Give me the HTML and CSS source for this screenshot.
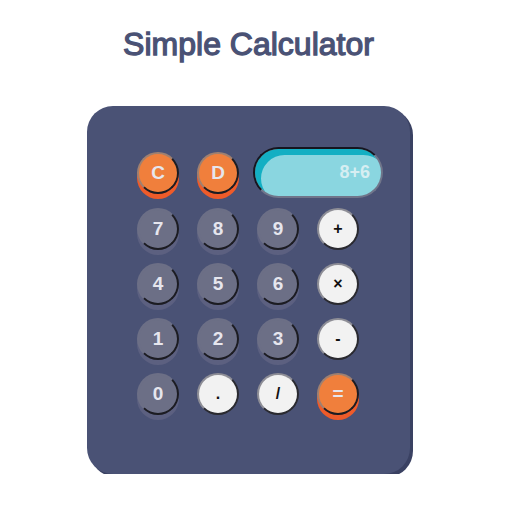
FILE: index.html
```html
<!DOCTYPE html>
<html>
<head>
<meta charset="utf-8">
<link rel="stylesheet" href="styles.css">
</head>
<body>
<div class="wrap">
  <h1 class="title">Simple Calculator</h1>
  <div class="calc">
    <div class="row row-top">
      <div class="btn orange">C</div>
      <div class="btn orange">D</div>
      <div class="display">8+6</div>
    </div>
    <div class="row">
      <div class="btn gray">7</div>
      <div class="btn gray">8</div>
      <div class="btn gray">9</div>
      <div class="btn white">+</div>
    </div>
    <div class="row">
      <div class="btn gray">4</div>
      <div class="btn gray">5</div>
      <div class="btn gray">6</div>
      <div class="btn white">×</div>
    </div>
    <div class="row">
      <div class="btn gray">1</div>
      <div class="btn gray">2</div>
      <div class="btn gray">3</div>
      <div class="btn white">-</div>
    </div>
    <div class="row">
      <div class="btn gray">0</div>
      <div class="btn white">.</div>
      <div class="btn white">/</div>
      <div class="btn orange">=</div>
    </div>
  </div>
</div>
</body>
</html>
```
FILE: styles.css
```css
html, body {
  margin: 0;
  padding: 0;
  background: #ffffff;
}
body {
  font-family: "Liberation Sans", Arial, sans-serif;
}
.wrap {
  width: 323px;
  margin-left: 87px;
}
.title {
  margin: 0;
  padding-top: 26px;
  font-size: 32px;
  line-height: 37px;
  font-weight: normal;
  -webkit-text-stroke: 1.3px #4a5275;
  color: #4a5275;
  text-align: center;
}
.calc {
  margin-top: 43px;
  width: 323px;
  height: 368px;
  box-sizing: border-box;
  padding: 41px 0 0 50px;
  border-radius: 26px;
  background: #4a5275;
  box-shadow: 3px 3px 0 #3a4162;
  display: flex;
  flex-direction: column;
  gap: 13px;
}
.row {
  display: flex;
  gap: 18px;
  align-items: center;
}
.row-top {
  margin-bottom: -3px;
}
.btn {
  width: 42px;
  height: 42px;
  box-sizing: border-box;
  border-radius: 50%;
  border: 2px solid;
  border-color: #8a8a92 #1c1c22 #1c1c22 #8a8a92;
  display: flex;
  align-items: center;
  justify-content: center;
  font-size: 19px;
  font-weight: bold;
  color: #e6e6ee;
}
.gray {
  background: #6c6f86;
  border-color: #6c6f86 #1c1c22 #1c1c22 #6c6f86;
  box-shadow: 0 5px 0 #5c6080;
}
.orange {
  background: #f07f3c;
  border-color: #a08070 #1c1c22 #1c1c22 #a08070;
  box-shadow: 0 5px 0 #ee5b2a;
}
.white {
  background: #f2f2f2;
  color: #111111;
  font-size: 16px;
  border-color: #8e8e96 #2a2a30 #2a2a30 #8e8e96;
}
.display {
  width: 130px;
  height: 51px;
  margin-left: -4px;
  box-sizing: border-box;
  border: 2px solid;
  border-color: #16161f #70758a #70758a #16161f;
  border-radius: 26px;
  background: #8ad6e0;
  box-shadow: inset 6px 6px 0 #13afc3;
  display: flex;
  align-items: center;
  justify-content: flex-end;
  padding-right: 11px;
  font-size: 18px;
  font-weight: bold;
  color: #d6eef2;
}
```
